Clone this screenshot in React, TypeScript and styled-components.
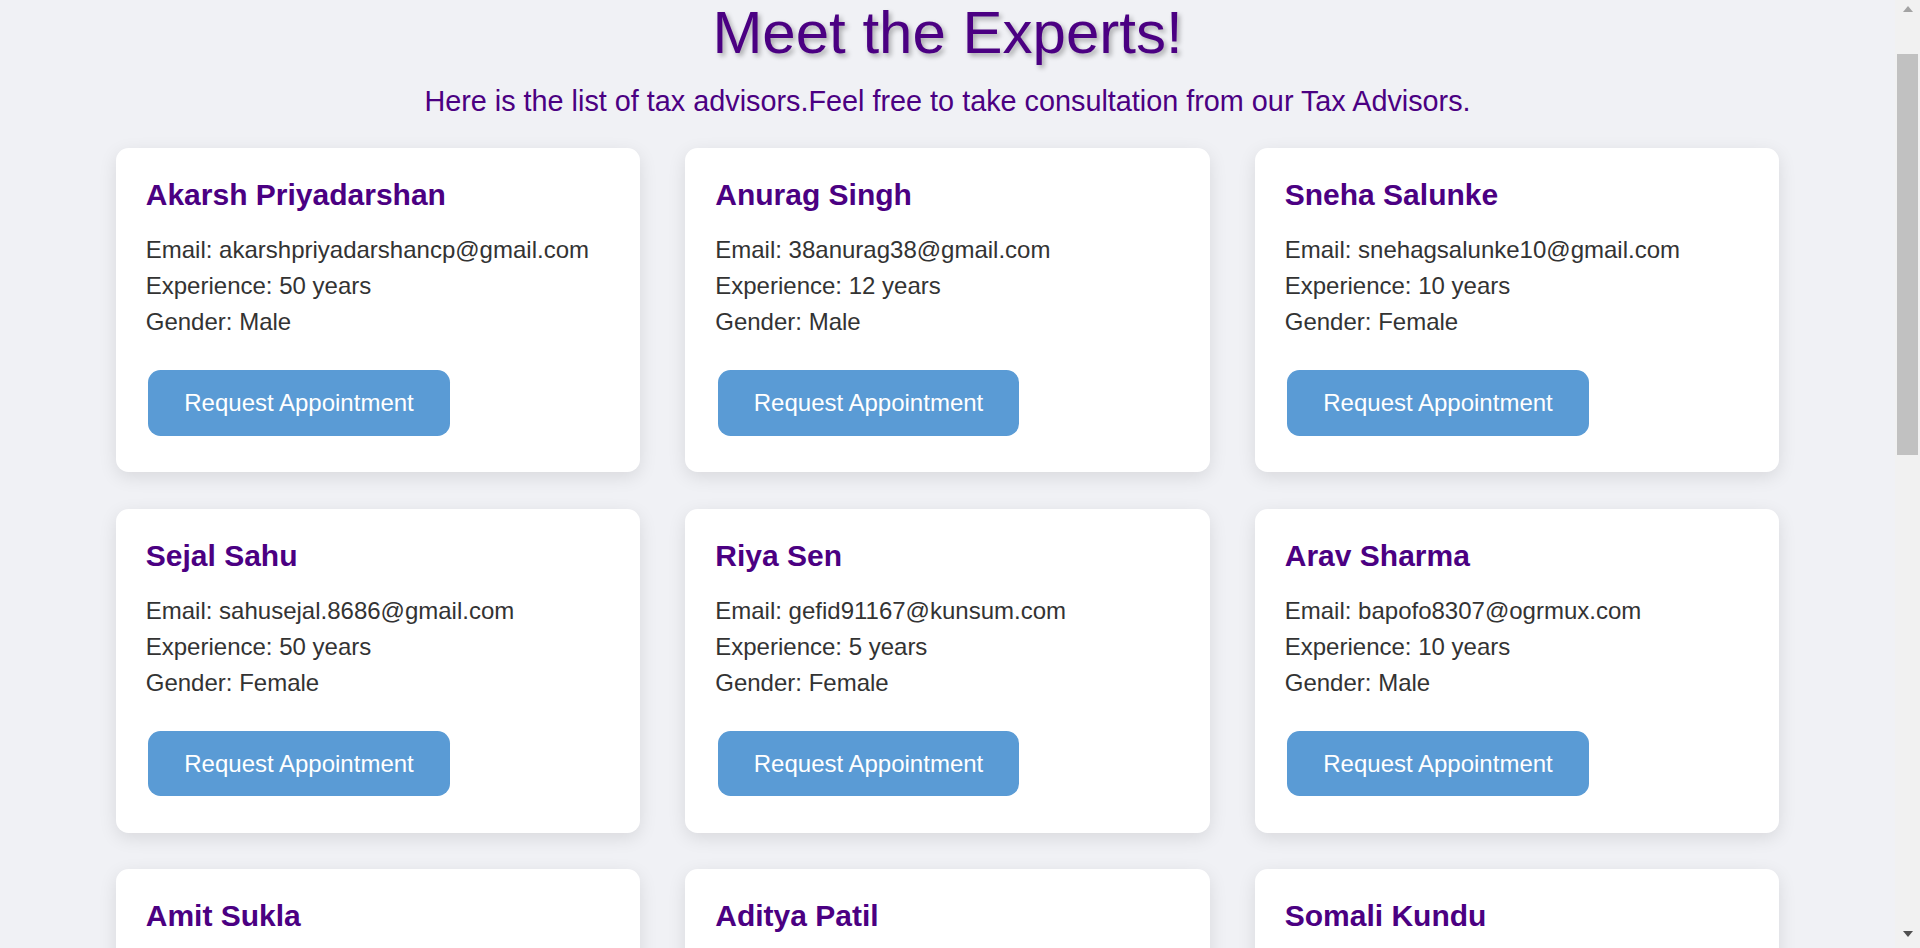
import React from "react";
import styled, { createGlobalStyle } from "styled-components";

const GlobalStyle = createGlobalStyle`
    html {
        background: #f0f1f5;
    }

    body {
        margin: 0;
        font-family: "Liberation Sans", Arial, sans-serif;
        background: #f0f1f5;
    }
`;

const Page = styled.div`
    padding: 0 25px 152px 0;
`;

const Header = styled.header`
    text-align: center;
`;

const Title = styled.h1`
    margin: 0;
    font-size: 60px;
    font-weight: normal;
    line-height: 65px;
    color: #4b0082;
    text-shadow: 2.5px 2.5px 5px rgba(0, 0, 0, 0.3);
`;

const Subtitle = styled.p`
    margin: 20px 0 0;
    font-size: 28.8px;
    line-height: 32.75px;
    color: #4b0082;
`;

const Grid = styled.div`
    display: grid;
    grid-template-columns: repeat(3, 1fr);
    column-gap: 45px;
    row-gap: 36.5px;
    max-width: 1663.5px;
    margin: 30.5px auto 0;
`;

const Card = styled.div`
    background: #fff;
    border-radius: 12.5px;
    padding: 30px;
    box-shadow: 0 5px 18px rgba(0, 0, 0, 0.1);
`;

const Name = styled.h3`
    margin: 0 0 19.5px;
    font-size: 30px;
    font-weight: bold;
    line-height: 34.5px;
    color: #4b0082;
`;

const Detail = styled.p`
    margin: 0;
    font-size: 24px;
    line-height: 36px;
    color: #333;
`;

const RequestButton = styled.button`
    display: block;
    width: fit-content;
    margin: 30px 0 6.5px 2.5px;
    padding: 18.75px 36px;
    border: none;
    border-radius: 12.5px;
    background: #5a9bd5;
    color: #fff;
    font-family: inherit;
    font-size: 24px;
    cursor: pointer;
    transition: background-color 0.3s;

    &:hover {
        background: #4a8ac4;
    }
`;

/* window scrollbar, drawn since the page shot has one */
const ScrollRail = styled.div`
    position: fixed;
    top: 0;
    right: 0;
    width: 25px;
    height: 100vh;
    display: flex;
    flex-direction: column;
    align-items: center;
    background: #f1f1f1;
`;

const ScrollArrow = styled.div<{ $down?: boolean }>`
    width: 0;
    height: 0;
    margin: ${(p) => (p.$down ? "auto 0 11px" : "6px 0 0")};
    border-left: 5.5px solid transparent;
    border-right: 5.5px solid transparent;
    ${(p) =>
        p.$down
            ? "border-top: 6px solid #505050;"
            : "border-bottom: 6px solid #a3a3a3;"}
`;

const ScrollThumb = styled.div`
    width: 21px;
    height: 401px;
    margin-top: 42px;
    background: #c1c1c1;
`;

interface Advisor {
    name: string;
    email: string;
    experience: number;
    gender: string;
}

const advisors: Advisor[] = [
    { name: "Akarsh Priyadarshan", email: "akarshpriyadarshancp@gmail.com", experience: 50, gender: "Male" },
    { name: "Anurag Singh", email: "38anurag38@gmail.com", experience: 12, gender: "Male" },
    { name: "Sneha Salunke", email: "snehagsalunke10@gmail.com", experience: 10, gender: "Female" },
    { name: "Sejal Sahu", email: "sahusejal.8686@gmail.com", experience: 50, gender: "Female" },
    { name: "Riya Sen", email: "gefid91167@kunsum.com", experience: 5, gender: "Female" },
    { name: "Arav Sharma", email: "bapofo8307@ogrmux.com", experience: 10, gender: "Male" },
    { name: "Amit Sukla", email: "amitsukla@gmail.com", experience: 8, gender: "Male" },
    { name: "Aditya Patil", email: "adityapatil@gmail.com", experience: 6, gender: "Male" },
    { name: "Somali Kundu", email: "somalikundu@gmail.com", experience: 7, gender: "Female" },
    { name: "Rohan Mehta", email: "rohanmehta@gmail.com", experience: 9, gender: "Male" },
    { name: "Priya Nair", email: "priyanair@gmail.com", experience: 4, gender: "Female" },
    { name: "Karan Verma", email: "karanverma@gmail.com", experience: 15, gender: "Male" },
    { name: "Neha Joshi", email: "nehajoshi@gmail.com", experience: 3, gender: "Female" },
    { name: "Vikram Rao", email: "vikramrao@gmail.com", experience: 20, gender: "Male" },
    { name: "Ananya Das", email: "ananyadas@gmail.com", experience: 6, gender: "Female" },
];

const AdvisorCard: React.FC<{ advisor: Advisor }> = ({ advisor }) => (
    <Card>
        <Name>{advisor.name}</Name>
        <Detail>Email: {advisor.email}</Detail>
        <Detail>Experience: {advisor.experience} years</Detail>
        <Detail>Gender: {advisor.gender}</Detail>
        <RequestButton>Request Appointment</RequestButton>
    </Card>
);

const App: React.FC = () => {
    return (
        <Page>
            <GlobalStyle />
            <Header>
                <Title>Meet the Experts!</Title>
                <Subtitle>
                    Here is the list of tax advisors.Feel free to take consultation from our Tax Advisors.
                </Subtitle>
            </Header>
            <Grid>
                {advisors.map((a) => (
                    <AdvisorCard key={a.email} advisor={a} />
                ))}
            </Grid>
            <ScrollRail>
                <ScrollArrow />
                <ScrollThumb />
                <ScrollArrow $down />
            </ScrollRail>
        </Page>
    );
};

export default App;
